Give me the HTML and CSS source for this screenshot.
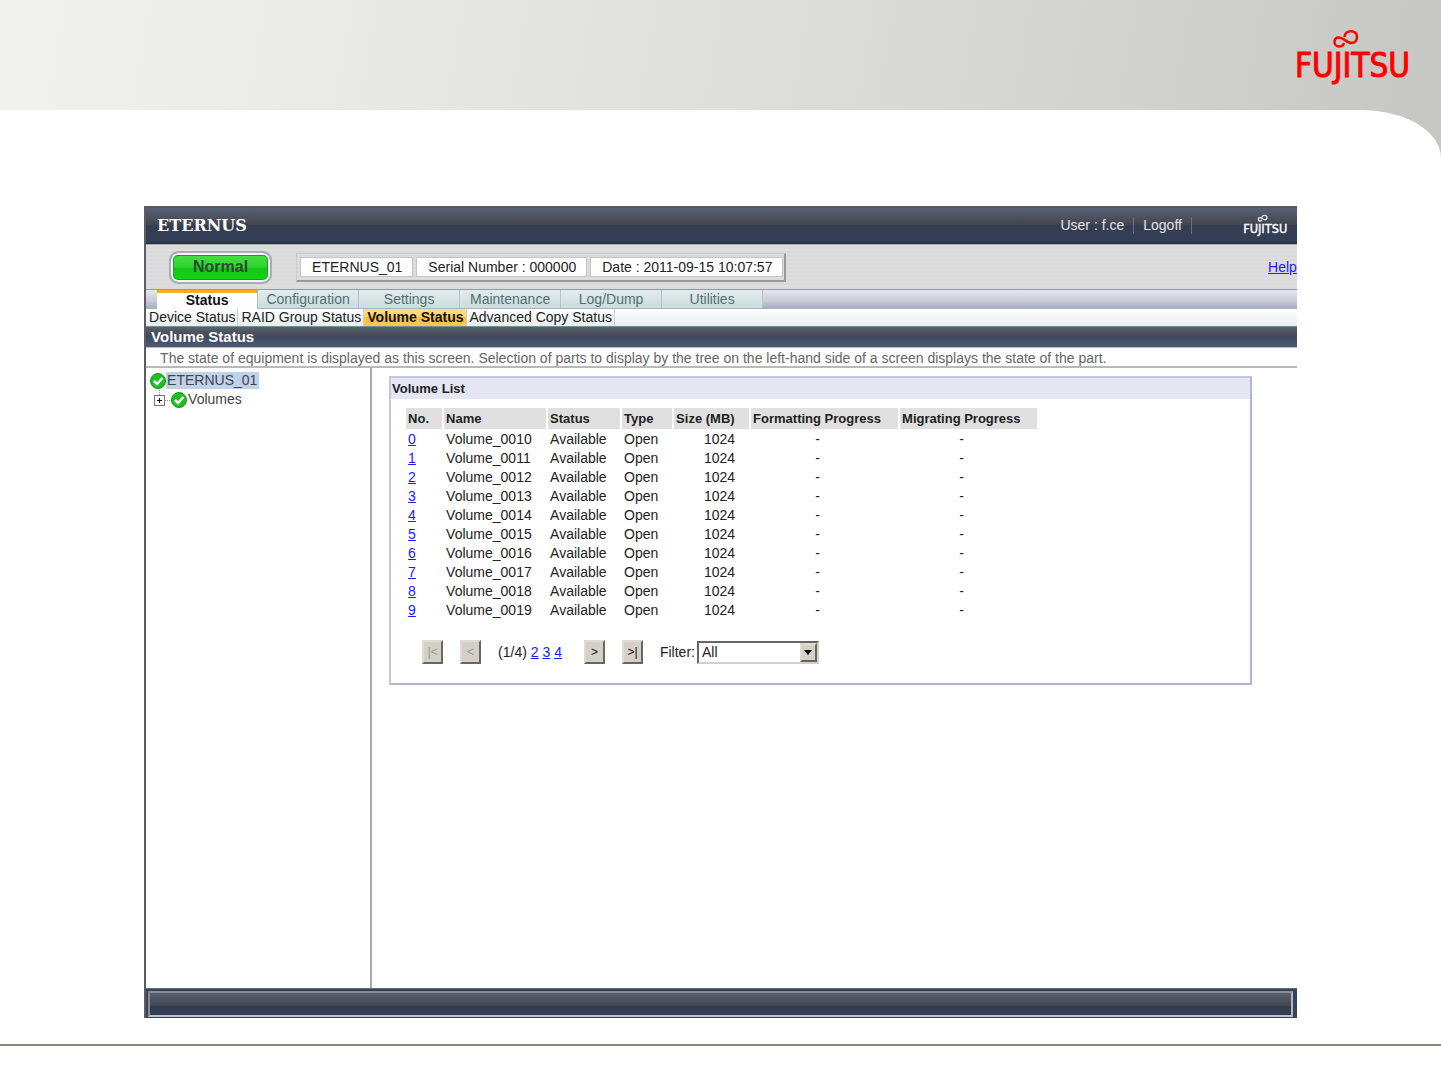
FILE: index.html
```html
<!DOCTYPE html>
<html lang="en">
<head>
<meta charset="utf-8">
<title>ETERNUS - Volume Status</title>
<link rel="stylesheet" href="styles.css">
</head>
<body>
<header class="banner">
  <svg class="brand" viewBox="0 0 120 60" role="img" aria-label="Fujitsu">
    <text x="3" y="49">FUJITSU</text>
    <path d="M52.500 9 C52.500 5.500 55.500 3.200 59 3.200 C63 3.200 65 6 65 9 C65 12.500 62.500 15 59.500 15 C54.500 15 51.500 9.500 47 9.500 C44 9.500 42.500 11.500 42.500 14 C42.500 16.500 44.500 18.500 47 18.500 C49.500 18.500 51.500 17 52 15"/>
  </svg>
</header>
<main class="slide">
  <div class="app">
    <div class="topbar">
      <strong class="product">ETERNUS</strong>
      <nav class="user">
        <span class="user-item">User : f.ce</span>
        <a class="user-item" href="#">Logoff</a>
      </nav>
      <svg class="brand-small" viewBox="0 0 120 60" role="img" aria-label="Fujitsu">
        <text x="3" y="49">FUJITSU</text>
        <path d="M52.500 9 C52.500 5.500 55.500 3.200 59 3.200 C63 3.200 65 6 65 9 C65 12.500 62.500 15 59.500 15 C54.500 15 51.500 9.500 47 9.500 C44 9.500 42.500 11.500 42.500 14 C42.500 16.500 44.500 18.500 47 18.500 C49.500 18.500 51.500 17 52 15"/>
      </svg>
    </div>
    <div class="statusbar">
      <div class="state">Normal</div>
      <div class="facts">
        <span class="fact">ETERNUS_01</span>
        <span class="fact">Serial Number : 000000</span>
        <span class="fact">Date : 2011-09-15 10:07:57</span>
      </div>
      <a class="help" href="#">Help</a>
    </div>
    <nav class="tabs">
      <a class="tab tab-on" href="#">Status</a>
      <a class="tab" href="#">Configuration</a>
      <a class="tab" href="#">Settings</a>
      <a class="tab" href="#">Maintenance</a>
      <a class="tab" href="#">Log/Dump</a>
      <a class="tab" href="#">Utilities</a>
    </nav>
    <nav class="subtabs">
      <a class="subtab" href="#">Device Status</a>
      <a class="subtab" href="#">RAID Group Status</a>
      <a class="subtab subtab-on" href="#">Volume Status</a>
      <a class="subtab" href="#">Advanced Copy Status</a>
    </nav>
    <h1 class="title">Volume Status</h1>
    <p class="hint">The state of equipment is displayed as this screen. Selection of parts to display by the tree on the left-hand side of a screen displays the state of the part.</p>
    <div class="work">
      <aside class="tree">
        <div class="node">
          <svg class="ok" viewBox="0 0 16 16"><circle cx="8" cy="8" r="7.500"/><path d="M4 8 L7 11 L12.500 5"/></svg>
          <span class="node-name node-on">ETERNUS_01</span>
        </div>
        <div class="node node-child">
          <svg class="expander" viewBox="0 0 17 19"><path class="dots" d="M5.500 0 V5 M11 10.500 H17"/><rect x="0.500" y="5.500" width="10" height="10"/><path d="M3 10.500 H8 M5.500 8 V13"/></svg>
          <svg class="ok" viewBox="0 0 16 16"><circle cx="8" cy="8" r="7.500"/><path d="M4 8 L7 11 L12.500 5"/></svg>
          <span class="node-name">Volumes</span>
        </div>
      </aside>
      <section class="detail">
        <div class="panel">
          <h2 class="panel-title">Volume List</h2>
          <table class="volumes">
            <colgroup><col class="c-no"><col class="c-name"><col class="c-status"><col class="c-type"><col class="c-size"><col class="c-format"><col class="c-migrate"></colgroup>
            <thead>
              <tr><th>No.</th><th>Name</th><th>Status</th><th>Type</th><th>Size (MB)</th><th>Formatting Progress</th><th>Migrating Progress</th></tr>
            </thead>
            <tbody>
              <tr><td><a href="#">0</a></td><td>Volume_0010</td><td>Available</td><td>Open</td><td class="num">1024</td><td class="mid">-</td><td class="mid">-</td></tr>
              <tr><td><a href="#">1</a></td><td>Volume_0011</td><td>Available</td><td>Open</td><td class="num">1024</td><td class="mid">-</td><td class="mid">-</td></tr>
              <tr><td><a href="#">2</a></td><td>Volume_0012</td><td>Available</td><td>Open</td><td class="num">1024</td><td class="mid">-</td><td class="mid">-</td></tr>
              <tr><td><a href="#">3</a></td><td>Volume_0013</td><td>Available</td><td>Open</td><td class="num">1024</td><td class="mid">-</td><td class="mid">-</td></tr>
              <tr><td><a href="#">4</a></td><td>Volume_0014</td><td>Available</td><td>Open</td><td class="num">1024</td><td class="mid">-</td><td class="mid">-</td></tr>
              <tr><td><a href="#">5</a></td><td>Volume_0015</td><td>Available</td><td>Open</td><td class="num">1024</td><td class="mid">-</td><td class="mid">-</td></tr>
              <tr><td><a href="#">6</a></td><td>Volume_0016</td><td>Available</td><td>Open</td><td class="num">1024</td><td class="mid">-</td><td class="mid">-</td></tr>
              <tr><td><a href="#">7</a></td><td>Volume_0017</td><td>Available</td><td>Open</td><td class="num">1024</td><td class="mid">-</td><td class="mid">-</td></tr>
              <tr><td><a href="#">8</a></td><td>Volume_0018</td><td>Available</td><td>Open</td><td class="num">1024</td><td class="mid">-</td><td class="mid">-</td></tr>
              <tr><td><a href="#">9</a></td><td>Volume_0019</td><td>Available</td><td>Open</td><td class="num">1024</td><td class="mid">-</td><td class="mid">-</td></tr>
            </tbody>
          </table>
          <div class="pager">
            <button class="step" type="button" disabled>|&lt;</button>
            <button class="step" type="button" disabled>&lt;</button>
            <span class="pages">(1/4) <a href="#">2</a> <a href="#">3</a> <a href="#">4</a></span>
            <button class="step" type="button">&gt;</button>
            <button class="step" type="button">&gt;|</button>
            <div class="filter">
              <label for="filter">Filter:</label>
              <span class="dropdown">
                <select id="filter"><option>All</option></select>
                <span class="arrow" aria-hidden="true"></span>
              </span>
            </div>
          </div>
        </div>
      </section>
    </div>
    <div class="actions"><div class="actions-slot"></div></div>
  </div>
</main>
<footer class="foot"></footer>
</body>
</html>
```
FILE: styles.css
```css
* { box-sizing: border-box; }

body {
  margin: 0;
  min-height: 100vh;
  display: flex;
  flex-direction: column;
  font: 14px/17px "Liberation Sans", Arial, sans-serif;
  color: #222;
  background: linear-gradient(100deg, #f1f1ef 0%, #e9e9e7 25%, #d8d8d4 65%, #c6c6c3 100%) 0 0 / 100% 160px no-repeat #fff;
}

a { color: #1a1aff; }

/* Corporate banner */
.banner {
  height: 110px;
  padding: 28px 29px 0;
  display: flex;
  justify-content: flex-end;
}

.brand { width: 120px; height: 60px; }

.brand text,
.brand-small text { font: 33px "DejaVu Sans Condensed", "DejaVu Sans", sans-serif; font-stretch: condensed; }

.brand text { fill: #f00; stroke: #f00; stroke-width: 1; }
.brand path { fill: none; stroke: #f00; stroke-width: 2.500; }

.slide {
  flex: 1;
  display: flex;
  padding: 96px 10% 26px;
  background: #fff;
  border-top-right-radius: 80px 48px;
}

.app {
  flex: 1;
  min-width: 0;
  display: flex;
  flex-direction: column;
  border-left: 2px solid #5c5d62;
  background: #fff;
}

.topbar {
  height: 38px;
  padding: 0 9px 0 11px;
  display: flex;
  align-items: center;
  border-top: 2px solid #555a66;
  border-bottom: 2px solid #2b3346;
  background: linear-gradient(#586074, #42464f 48%, #333d52 52%, #343f55);
  color: #e4e4e8;
}

.product {
  margin-right: auto;
  font: bold 16px "DejaVu Serif", serif;
  color: #fff;
}

.user { display: flex; margin-right: 50px; }

.user-item {
  padding: 0 9px;
  border-right: 1px solid #666e80;
  color: inherit;
  text-decoration: none;
}

.brand-small { width: 46px; height: 23px; }
.brand-small text { fill: #fff; stroke: #fff; stroke-width: 1; }
.brand-small path { fill: none; stroke: #fff; stroke-width: 3; }

.statusbar {
  height: 46px;
  padding-left: 23px;
  display: flex;
  align-items: center;
  border-top: 1px solid #aaa;
  border-bottom: 1px solid #8e9bab;
  background: repeating-linear-gradient(#dedede 0 2px, #dadada 2px 4px);
}

.state {
  width: 103px;
  height: 33px;
  margin-right: 24px;
  border: 2px solid #a9adbb;
  border-radius: 9px;
  box-shadow: inset 0 0 0 2px #f4f6fa, inset 0 0 0 3px #16a016;
  background: linear-gradient(#4be04b, #2ed42e 48%, #12c812 54%, #17d617);
  font: bold 16px/27px "Liberation Sans", Arial, sans-serif;
  color: #2e4a30;
  text-align: center;
}

.facts {
  display: flex;
  gap: 3px;
  padding: 3px 1px 3px 3px;
  border: 1px solid #ccc;
  border-right: 2px solid #999;
  border-bottom: 2px solid #999;
}

.fact {
  padding: 0 10px 0 11px;
  border: 1px solid #c4c4c4;
  line-height: 18px;
  background: #fff;
}

.help { margin-left: auto; }

.tabs {
  height: 19px;
  padding-left: 11px;
  display: flex;
  border-bottom: 1px solid #a9b3c4;
  background: linear-gradient(#e4e6ee, #c9ccd8 60%, #a7adc5);
}

.tab {
  width: 101px;
  border-right: 1px solid #b2c4c8;
  background: linear-gradient(#e4ebeb, #cddcde);
  color: #4f7075;
  line-height: 19px;
  text-align: center;
  text-decoration: none;
}

.tab-on {
  border-top: 3px solid #f9ac22;
  margin-bottom: -1px;
  background: #fff;
  color: #111;
  font-weight: bold;
  line-height: 14px;
}

.subtabs {
  height: 18px;
  display: flex;
  border-bottom: 1px solid #6f8f90;
  background: linear-gradient(#fff, #e6eeee);
}

.subtab {
  padding: 0 2px 0 3px;
  border-right: 1px solid #ccc;
  color: #222;
  text-decoration: none;
}

.subtab-on {
  background: linear-gradient(#ffe083, #ffd36a 45%, #fdbd3d 50%, #ffc655);
  color: #111;
  font-weight: bold;
}

.title {
  height: 20px;
  margin: 0;
  padding-left: 5px;
  background: linear-gradient(#59626f, #454a56 40%, #3f495f 50%, #4e5a74);
  font: bold 15px/20px "Liberation Sans", Arial, sans-serif;
  color: #fff;
}

.hint {
  margin: 0;
  padding: 2px 14px 0;
  border-top: 1px solid #bbb;
  border-bottom: 2px solid #b9b9b9;
  line-height: 16px;
  color: #666;
}

.work { flex: 1; display: flex; }

.tree {
  width: 226px;
  padding: 3px 0 0 4px;
  border-right: 2px solid #aaa;
}

.node {
  height: 19px;
  display: flex;
  align-items: center;
  color: #444;
}

.node-child { padding-left: 4px; }
.node-name { padding: 0 2px 0 1px; }
.node-on { background: #c0d1ec; }

.ok { width: 16px; height: 16px; }
.ok circle { fill: #1fbe22; stroke: #119a14; }
.ok path { fill: none; stroke: #fff; stroke-width: 2.500; }

.expander { width: 17px; height: 19px; }
.expander rect { fill: #fff; stroke: #777; }
.expander path { fill: none; stroke: #111; }
.expander .dots { stroke: #999; stroke-dasharray: 1 1; }

.detail { flex: 1; padding: 8px 45px 0 17px; }

.panel {
  padding-bottom: 19px;
  border: 2px solid #c5c7e2;
  border-right-color: #b3b4d2;
  border-bottom-color: #b3b4d2;
}

.panel-title {
  margin: 0;
  padding-left: 1px;
  background: #e4e6f3;
  font: bold 13px/21px "Liberation Sans", Arial, sans-serif;
}

.volumes {
  margin: 7px 0 0 13px;
  table-layout: fixed;
  width: 635px;
  border-spacing: 2px;
}

.volumes th {
  height: 21px;
  padding: 0 2px;
  background: #e0e0e0;
  font-size: 13px;
  text-align: left;
  white-space: nowrap;
}

.volumes td { padding: 0 2px; }
.volumes .num { padding-right: 14px; text-align: right; }
.volumes .mid { padding-right: 16px; text-align: center; }

.c-no { width: 36px; }
.c-name { width: 102px; }
.c-status { width: 72px; }
.c-type { width: 50px; }
.c-size { width: 75px; }
.c-format { width: 147px; }
.c-migrate { width: 137px; }

.pager {
  margin: 19px 0 0 31px;
  display: flex;
  align-items: center;
  gap: 17px;
}

.step {
  width: 21px;
  height: 24px;
  padding: 0;
  border: 2px solid;
  border-color: #dedbd3 #666 #666 #dedbd3;
  background: #d4d0c8;
  font: 12px "Liberation Sans", Arial, sans-serif;
  color: #111;
}

.step:disabled { color: #999; }
.pages { padding-right: 5px; }
.filter { display: flex; align-items: center; gap: 2px; }

.dropdown { display: grid; align-items: center; }

.dropdown select {
  grid-area: 1 / 1;
  width: 122px;
  height: 23px;
  padding: 0 3px;
  appearance: none;
  border: 2px solid;
  border-color: #666 #d4d0c8 #d4d0c8 #666;
  border-radius: 0;
  background: #fff;
  font: 14px "Liberation Sans", Arial, sans-serif;
  color: #222;
}

.arrow {
  grid-area: 1 / 1;
  justify-self: end;
  display: grid;
  place-items: center;
  width: 17px;
  height: 19px;
  margin-right: 2px;
  border: 2px solid;
  border-color: #dedbd3 #666 #666 #dedbd3;
  background: #d4d0c8;
  pointer-events: none;
}

.arrow::before {
  content: "";
  border: 4px solid transparent;
  border-top: 5px solid #000;
  border-bottom: 0;
}

.actions {
  height: 30px;
  padding: 2px 4px 1px 2px;
  border-top: 1px solid #666e82;
  background: #38425a;
}

.actions-slot {
  height: 100%;
  border: 2px solid;
  border-color: #8b8b8d #aeb6c0 #b9c2cb #8b8b8d;
  background: linear-gradient(#575f73, #42464f 58%, #333d52 60%, #343f55);
}

.foot {
  height: 37px;
  border-top: 2px solid #85857d;
  background: #fff;
}
```
